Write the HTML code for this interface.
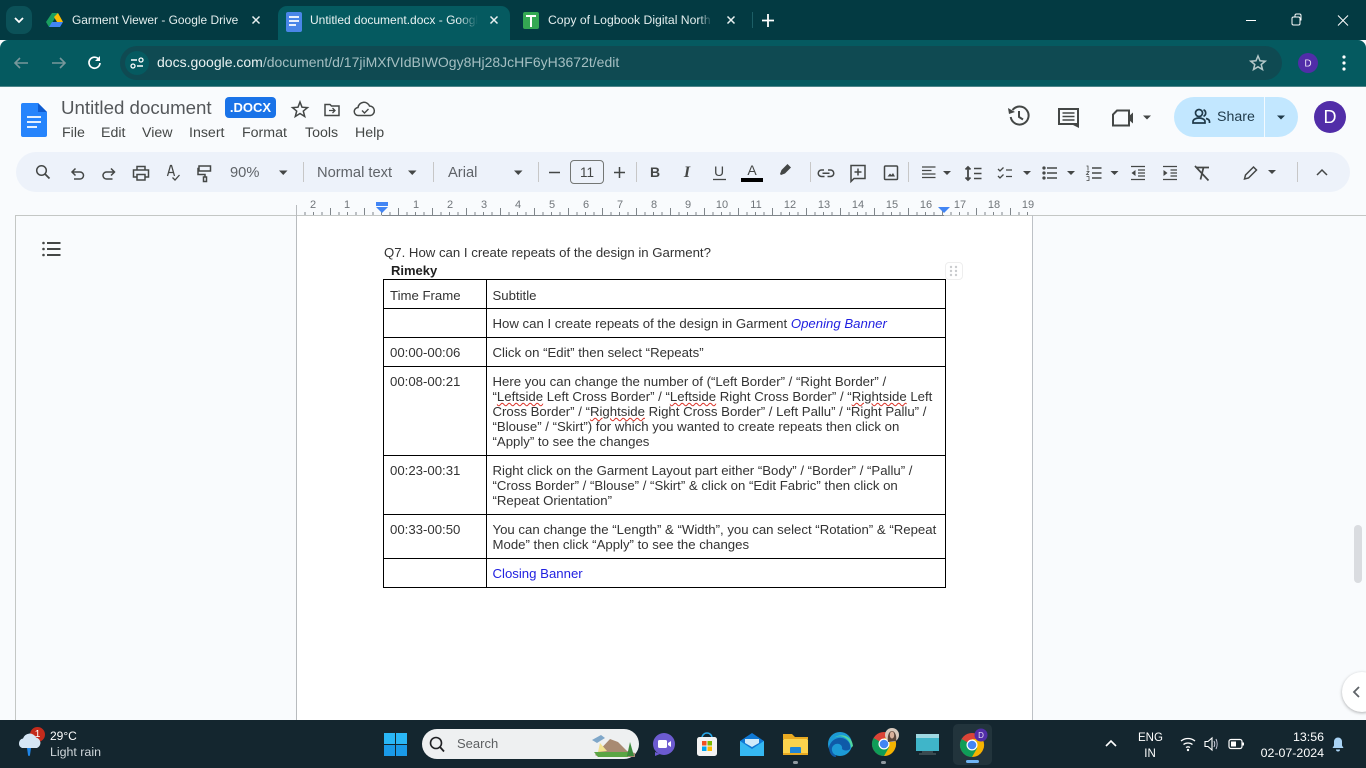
<!DOCTYPE html>
<html><head><meta charset="utf-8"><style>
html,body{margin:0;padding:0;width:1366px;height:768px;overflow:hidden;background:#f9fbfd;font-family:"Liberation Sans",sans-serif}
.a{position:absolute;white-space:nowrap}
.b{position:absolute}
.d{font-size:13.2px;color:#333;line-height:15px;position:absolute;white-space:nowrap}
.l{position:absolute;background:#000}
.m{position:absolute;font-size:14.2px;color:#444746;top:125px;line-height:17px}
.tb{position:absolute;font-size:14.7px;color:#5f6368;top:165px;line-height:17px}
.s{position:absolute;top:162px;width:1px;height:20px;background:#c7c7c7}
.r{position:absolute;font-size:11px;color:#70757a;top:199px;line-height:13px;transform:translateX(-50%)}
.tt{position:absolute;top:13px;font-size:12px;line-height:15px;white-space:nowrap;overflow:hidden;color:#e4eeee}
.k{position:absolute;left:1254px;width:70px;text-align:right;font-size:12.4px;line-height:14px;color:#fff}
.sp{text-decoration:underline wavy #d93025 1px;text-underline-offset:1px}
svg{position:absolute;left:0;top:0}
</style></head><body>
<!-- chrome bars -->
<div class="b" style="left:0;top:0;width:1366px;height:40px;background:#033a42"></div>
<div class="b" style="left:0;top:40px;width:1366px;height:46px;background:#055a60;border-radius:8px 8px 0 0"></div>
<div class="b" style="left:0;top:86px;width:1366px;height:1px;background:#4d8589"></div>
<div class="b" style="left:6px;top:6px;width:26px;height:28px;background:#0b5158;border-radius:9px"></div>
<div class="b" style="left:278px;top:6px;width:232px;height:34px;background:#055a60;border-radius:9px 9px 0 0"></div>
<div class="b" style="left:120px;top:46px;width:1162px;height:34px;background:#0f4a52;border-radius:17px"></div>
<div class="b" style="left:125px;top:51px;width:24px;height:24px;background:#055a60;border-radius:50%"></div>
<div class="tt" style="left:72px;font-size:11.950px">Garment Viewer - Google Drive</div>
<div class="tt" style="left:310px;width:168px;color:#e9f2f2;-webkit-mask-image:linear-gradient(90deg,#000 88%,transparent)">Untitled document.docx - Google Docs</div>
<div class="tt" style="left:548px;width:164px;font-size:12.200px;-webkit-mask-image:linear-gradient(90deg,#000 92%,transparent)">Copy of Logbook Digital North India</div>
<div class="a" style="left:157px;top:54px;font-size:14px;line-height:17px;color:#eaf2f2">docs.google.com<span style="color:#a5bfc2">/document/d/17jiMXfVIdBIWOgy8Hj28JcHF6yH3672t/edit</span></div>

<!-- docs header -->
<div class="a" style="left:61px;top:97px;font-size:18.7px;line-height:22px;color:#54575a">Untitled document</div>
<div class="b" style="left:225px;top:97px;width:51px;height:21px;background:#1a73e8;border-radius:4px;color:#fff;font-size:13px;line-height:21px;text-align:center;font-weight:700">.DOCX</div>
<div class="m" style="left:62px">File</div><div class="m" style="left:101px">Edit</div><div class="m" style="left:142px">View</div><div class="m" style="left:189px">Insert</div><div class="m" style="left:242px">Format</div><div class="m" style="left:305px">Tools</div><div class="m" style="left:355px">Help</div>
<div class="b" style="left:1174px;top:97px;width:124px;height:40px;background:#c2e7ff;border-radius:20px"></div>
<div class="b" style="left:1264px;top:97px;width:1px;height:40px;background:#f3faff"></div>
<div class="a" style="left:1217px;top:109px;font-size:14.2px;line-height:17px;color:#1f3a4a">Share</div>
<div class="b" style="left:1314px;top:101px;width:32px;height:32px;background:#512da8;border-radius:50%;color:#fff;font-size:18px;line-height:33px;text-align:center">D</div>

<!-- toolbar -->
<div class="b" style="left:16px;top:152px;width:1334px;height:40px;background:#edf2fa;border-radius:20px"></div>
<div class="tb" style="left:230px">90%</div><div class="tb" style="left:317px">Normal text</div><div class="tb" style="left:448px">Arial</div>
<div class="b" style="left:570px;top:160px;width:32px;height:22px;border:1px solid #747775;border-radius:4px;font-size:13.5px;line-height:23px;text-align:center;color:#444746">11</div>
<div class="s" style="left:303px"></div><div class="s" style="left:433px"></div><div class="s" style="left:538px"></div><div class="s" style="left:636px"></div><div class="s" style="left:810px"></div><div class="s" style="left:908px"></div><div class="s" style="left:1297px"></div>
<div class="a" style="left:647px;top:164px;font-size:14px;font-weight:700;line-height:17px;color:#444746;width:16px;text-align:center">B</div>
<div class="a" style="left:679px;top:164px;font-family:'Liberation Serif',serif;font-style:italic;font-weight:700;font-size:16px;line-height:17px;color:#444746;width:16px;text-align:center">I</div>
<div class="a" style="left:712px;top:163px;font-size:14px;line-height:17px;color:#444746;width:14px;text-align:center">U</div>
<div class="a" style="left:745px;top:162px;font-size:14px;line-height:17px;color:#444746;width:14px;text-align:center">A</div>

<!-- ruler -->
<div class="b" style="left:296px;top:212px;width:738px;height:3px;background:repeating-linear-gradient(90deg,#80868b 0 1px,transparent 1px 8.5px)"></div>
<div class="b" style="left:296px;top:208px;width:738px;height:7px;background:repeating-linear-gradient(90deg,#80868b 0 1px,transparent 1px 34px)"></div>
<div class="b" style="left:15px;top:215px;width:1351px;height:1px;background:#c4c7c5"></div>
<div class="b" style="left:382px;top:215px;width:562px;height:1px;background:#80868b"></div>
<div class="b" style="left:15px;top:215px;width:1px;height:505px;background:#c4c7c5"></div>
<div class="b" style="left:297px;top:216px;width:735px;height:504px;background:#fff"></div>
<div class="b" style="left:296px;top:205px;width:1px;height:515px;background:#b8bbbe"></div>
<div class="b" style="left:1032px;top:215px;width:1px;height:505px;background:#bdc1c6"></div>
<span class="r" style="left:313px">2</span><span class="r" style="left:347px">1</span><span class="r" style="left:416px">1</span><span class="r" style="left:450px">2</span><span class="r" style="left:484px">3</span><span class="r" style="left:518px">4</span><span class="r" style="left:552px">5</span><span class="r" style="left:586px">6</span><span class="r" style="left:620px">7</span><span class="r" style="left:654px">8</span><span class="r" style="left:688px">9</span><span class="r" style="left:722px">10</span><span class="r" style="left:756px">11</span><span class="r" style="left:790px">12</span><span class="r" style="left:824px">13</span><span class="r" style="left:858px">14</span><span class="r" style="left:892px">15</span><span class="r" style="left:926px">16</span><span class="r" style="left:960px">17</span><span class="r" style="left:994px">18</span><span class="r" style="left:1028px">19</span>

<!-- doc content -->
<div class="d" style="left:384px;top:245px">Q7. How can I create repeats of the design in Garment?</div>
<div class="d" style="left:391px;top:263px;font-weight:700;font-size:13px;color:#202020">Rimeky</div>
<div class="l" style="left:383px;top:279px;width:563px;height:1px"></div>
<div class="l" style="left:383px;top:308px;width:563px;height:1px"></div>
<div class="l" style="left:383px;top:337px;width:563px;height:1px"></div>
<div class="l" style="left:383px;top:366px;width:563px;height:1px"></div>
<div class="l" style="left:383px;top:455px;width:563px;height:1px"></div>
<div class="l" style="left:383px;top:514px;width:563px;height:1px"></div>
<div class="l" style="left:383px;top:558px;width:563px;height:1px"></div>
<div class="l" style="left:383px;top:587px;width:563px;height:1px"></div>
<div class="l" style="left:383px;top:279px;width:1px;height:309px"></div>
<div class="l" style="left:486px;top:279px;width:1px;height:309px"></div>
<div class="l" style="left:945px;top:279px;width:1px;height:309px"></div>
<div class="d" style="left:390px;top:288px">Time Frame</div>
<div class="d" style="left:492.500px;top:288px">Subtitle</div>
<div class="d" style="left:492.500px;top:316px">How can I create repeats of the design in Garment <i style="color:#1f1fe0">Opening Banner</i></div>
<div class="d" style="left:390px;top:345px">00:00-00:06</div>
<div class="d" style="left:492.500px;top:345px">Click on “Edit” then select “Repeats”</div>
<div class="d" style="left:390px;top:374px">00:08-00:21</div>
<div class="d" style="left:492.500px;top:374px">Here you can change the number of (“Left Border” / “Right Border” /</div>
<div class="d" style="left:492.500px;top:389px">“<span class="sp">Leftside</span> Left Cross Border” / “<span class="sp">Leftside</span> Right Cross Border” / “<span class="sp">Rightside</span> Left</div>
<div class="d" style="left:492.500px;top:404px">Cross Border” / “<span class="sp">Rightside</span> Right Cross Border” / Left Pallu” / “Right Pallu” /</div>
<div class="d" style="left:492.500px;top:419px">“Blouse” / “Skirt”) for which you wanted to create repeats then click on</div>
<div class="d" style="left:492.500px;top:434px">“Apply” to see the changes</div>
<div class="d" style="left:390px;top:463px">00:23-00:31</div>
<div class="d" style="left:492.500px;top:463px">Right click on the Garment Layout part either “Body” / “Border” / “Pallu” /</div>
<div class="d" style="left:492.500px;top:478px">“Cross Border” / “Blouse” / “Skirt” &amp; click on “Edit Fabric” then click on</div>
<div class="d" style="left:492.500px;top:493px">“Repeat Orientation”</div>
<div class="d" style="left:390px;top:522px">00:33-00:50</div>
<div class="d" style="left:492.500px;top:522px">You can change the “Length” &amp; “Width”, you can select “Rotation” &amp; “Repeat</div>
<div class="d" style="left:492.500px;top:537px">Mode” then click “Apply” to see the changes</div>
<div class="d" style="left:492.500px;top:566px;color:#1f1fe0">Closing Banner</div>
<div class="b" style="left:945px;top:262px;width:16px;height:16px;border:1px solid #eeeeee;border-radius:4px;background:#fff"></div>
<div class="b" style="left:1354px;top:525px;width:8px;height:58px;background:#dadce0;border-radius:4px"></div>
<div class="b" style="left:1342px;top:672px;width:40px;height:40px;background:#fff;border-radius:50%;box-shadow:0 1px 3px rgba(0,0,0,.3)"></div>

<!-- taskbar -->
<div class="b" style="left:0;top:720px;width:1366px;height:48px;background:#14262f"></div>
<div class="a" style="left:50px;top:729px;font-size:12px;line-height:14px;color:#fff">29°C</div>
<div class="a" style="left:50px;top:745px;font-size:12.4px;line-height:14px;color:#cfd6da">Light rain</div>
<div class="b" style="left:30px;top:727px;width:15px;height:15px;border-radius:50%;background:#c42b1c;color:#fff;font-size:10px;line-height:15px;text-align:center">1</div>
<div class="b" style="left:422px;top:729px;width:217px;height:30px;border-radius:15px;background:#eef0f1"></div>
<div class="a" style="left:457px;top:736px;font-size:13px;line-height:16px;color:#5c5f61">Search</div>
<div class="b" style="left:953px;top:724px;width:39px;height:41px;border-radius:5px;background:#22343c"></div>
<div class="b" style="left:966px;top:760px;width:13px;height:3px;border-radius:2px;background:#6fb5f5"></div>
<div class="b" style="left:793px;top:761px;width:5px;height:3px;border-radius:2px;background:#8f9aa0"></div>
<div class="b" style="left:881px;top:761px;width:5px;height:3px;border-radius:2px;background:#8f9aa0"></div>
<div class="a" style="left:1138px;top:731px;font-size:11.5px;line-height:14px;color:#fff;width:24px;text-align:center">ENG</div>
<div class="a" style="left:1138px;top:747px;font-size:11.5px;line-height:14px;color:#fff;width:24px;text-align:center">IN</div>
<div class="k" style="top:730px">13:56</div>
<div class="k" style="top:746px">02-07-2024</div>

<svg width="1366" height="768" viewBox="0 0 1366 768" fill="none">
<!-- tab strip -->
<path d="M15 18l4 4 4-4" stroke="#fff" stroke-width="1.800"/>
<path d="M52 13h6l-6 10-3 4-3-5z" fill="#1a9e5f"/><path d="M49 27l3-5h11l-3 5z" fill="#4285f4"/><path d="M58 13l5 9h-6l-3-5z" fill="#fbbc04"/>
<path d="M252.500 16.500l7 7M259.500 16.500l-7 7M490.500 16.500l7 7M497.500 16.500l-7 7M727.500 16.500l7 7M734.500 16.500l-7 7" stroke="#e8f0f0" stroke-width="1.500"/>
<rect x="286" y="12" width="16" height="20" rx="2" fill="#4a86e8"/><path d="M289 17h10M289 21h10M289 25h7" stroke="#fff" stroke-width="1.700"/>
<rect x="523" y="12" width="16" height="17" rx="2" fill="#34a853"/><path d="M526 16h10M531 16v11" stroke="#fff" stroke-width="2"/>
<path d="M768 14v13M762 20.500h12" stroke="#fff" stroke-width="1.800"/><path d="M752.500 12v16" stroke="#1c5e66" stroke-width="1"/>
<path d="M1246 20.500h10" stroke="#fff"/><rect x="1292" y="17" width="8" height="8" rx="1.500" stroke="#fff"/><path d="M1295 17v-1.500a1.500 1.500 0 0 1 1.500-1.500h3a1.500 1.500 0 0 1 1.500 1.500v5" stroke="#fff"/><path d="M1338 15.500l10 10M1348 15.500l-10 10" stroke="#fff"/>
<!-- omnibox -->
<path d="M28 63H15m5-5l-5 5 5 5" stroke="#78979b" stroke-width="1.600"/><path d="M52 63h13m-5-5l5 5-5 5" stroke="#78979b" stroke-width="1.600"/>
<path d="M99 59.500a5.500 5.500 0 1 0 1 3.500" stroke="#fff" stroke-width="1.700"/><path d="M100 56v5h-5z" fill="#fff"/>
<path d="M131 60h6M137 66h6" stroke="#fff" stroke-width="1.400"/><circle cx="141" cy="60" r="2" stroke="#fff" stroke-width="1.300"/><circle cx="133" cy="66" r="2" stroke="#fff" stroke-width="1.300"/>
<path d="M1258 56l2 4.800 5.200.4-4 3.300 1.300 5-4.500-2.700-4.500 2.700 1.300-5-4-3.300 5.200-.4z" stroke="#b4c8c9" stroke-width="1.500"/>
<circle cx="1308" cy="63" r="10" fill="#512da8"/><text x="1308" y="66.500" fill="#e8e0f5" font-size="10" text-anchor="middle" font-family="Liberation Sans">D</text>
<circle cx="1344" cy="57" r="1.600" fill="#fff"/><circle cx="1344" cy="63" r="1.600" fill="#fff"/><circle cx="1344" cy="69" r="1.600" fill="#fff"/>
<!-- docs logo -->
<path d="M21 105a2 2 0 0 1 2-2h15l9 9v23a2 2 0 0 1-2 2H23a2 2 0 0 1-2-2z" fill="#2684fc"/><path d="M38 103l9 9h-9z" fill="#0f5bd0"/><path d="M27 117h14M27 122h14M27 127h10" stroke="#fff" stroke-width="1.800"/>
<path d="M300 102l2 5.200 5.500.4-4.200 3.500 1.400 5.400-4.700-3-4.700 3 1.400-5.400-4.200-3.500 5.500-.4z" stroke="#444746" stroke-width="1.500"/>
<path d="M325 104.500h5l1.500 1.500h7.500v9.500h-14z" stroke="#444746" stroke-width="1.500"/><path d="M329 110.500h6m-2.500-2.500l2.500 2.500-2.500 2.500" stroke="#444746" stroke-width="1.300"/>
<path d="M362 115.500h-3.500a4 4 0 0 1-.5-8 6 6 0 0 1 11.500-1.500 4.800 4.800 0 0 1 1 9.500z" stroke="#444746" stroke-width="1.500"/><path d="M362 110.500l2.500 2.500 4-4" stroke="#444746" stroke-width="1.400"/>
<!-- header right -->
<path d="M1012.500 110a9 9 0 1 1-1.800 7" stroke="#444746" stroke-width="2"/><path d="M1008 108l1 6 6-2z" fill="#444746"/><path d="M1019 111v6l4 2.500" stroke="#444746" stroke-width="2"/>
<path d="M1059 109h19v15h-19z" stroke="#444746" stroke-width="2"/><path d="M1073 125h6v3z" fill="#444746"/><path d="M1062.500 113h12M1062.500 116.500h12M1062.500 120h12" stroke="#444746" stroke-width="1.600"/>
<path d="M1117 110.500h12v15h-16v-11z" stroke="#444746" stroke-width="2"/><path d="M1129 116l4-3.500v11l-4-3.500z" fill="#444746"/>
<path d="M1143 115.500h8l-4 4z" fill="#444746"/>
<circle cx="1199" cy="113" r="3.500" stroke="#1f3a4a" stroke-width="1.700"/><path d="M1193 123v-1.500c0-2 3-3.500 6-3.500s6 1.500 6 3.500v1.500z" stroke="#1f3a4a" stroke-width="1.700"/><path d="M1203.500 109.800a3.500 3.500 0 0 1 0 6.500M1206 118.500c2 .5 3.500 1.500 3.500 3v1.500" stroke="#1f3a4a" stroke-width="1.700"/>
<path d="M1277 115.500h8l-4 4z" fill="#1f3a4a"/>
<!-- toolbar icons -->
<g stroke="#444746" stroke-width="1.500">
<circle cx="41.500" cy="170.500" r="4.800"/><path d="M45 174l4.500 4.500" stroke-width="1.800"/>
<path d="M72.500 172h7.500a3.500 3.500 0 0 1 0 7h-6M75.500 168.500L72 172l3.500 3.500"/>
<path d="M114 172h-7.500a3.500 3.500 0 0 0 0 7h6M111 168.500l3.500 3.500-3.500 3.500"/>
<path d="M137 170v-3.500h8v3.500M137 177h-3.500v-7h15v7H145"/><rect x="137" y="174.500" width="8" height="5.500"/>
<path d="M167.500 176l3-10.500h1l3 10.500M168.500 172.500h5M172.500 177.500l2.500 2.500 4.500-5" stroke-width="1.300"/>
<rect x="199" y="166" width="11.500" height="5"/><path d="M199 168.500h-1v6h7v2.500"/><rect x="203.500" y="177" width="3" height="4.500"/>
<path d="M549 172.500h11M614 172.500h11M619.500 167v11"/>
<path d="M741 180h22" stroke="#000" stroke-width="4"/>
<path d="M713 179.500h13" stroke-width="1.300"/>
<path d="M781 175l-1-1 1.500-4 6-6 3.500 3.500-6 6z" fill="#444746" stroke="none"/>
<path d="M824 170h-2.500a3 3 0 0 0 0 6.500h3M828 170h2.500a3 3 0 0 1 0 6.500h-3M822.500 173.300h7"/>
<path d="M851 165.500h14v13h-11l-3 3z"/><path d="M858 168.500v7M854.500 172h7"/>
<rect x="884.500" y="166" width="13" height="13.500" rx="1"/><path d="M887.500 176.500l2.500-3 1.500 1.500 1.500-2 2 3.500z" fill="#444746" stroke="none"/>
<path d="M922 167h13.500M922 170.500h9.500M922 174h13.500M922 177.500h13.500" stroke-width="1.300"/>
<path d="M968 168v11M965.500 169.500l2.500-2.500 2.500 2.500M965.500 177.500l2.500 2.500 2.500-2.500" stroke-width="1.800"/><path d="M974 168.500h7.500M974 173.500h7.500M974 178.500h7.500" stroke-width="1.400"/>
<path d="M998 169l2 2 3.500-3.500M998 176l2 2 3.500-3.500M1006 170h6M1006 176.500h6" stroke-width="1.300"/>
<path d="M1047 168h10M1047 173h10M1047 178h10" stroke-width="1.500"/><circle cx="1044" cy="168" r=".9"/><circle cx="1044" cy="173" r=".9"/><circle cx="1044" cy="178" r=".9"/>
<path d="M1092 168h9.500M1092 173h9.500M1092 178h9.500" stroke-width="1.500"/><path d="M1086.500 166h1.500v4.500M1086.500 171.500h2.500l-2.500 3h2.500M1086.500 176.500h2.500v4h-2.500" stroke-width=".8"/>
<path d="M1131 166.500h14M1138 170h7M1138 173h7M1138 176h7M1131 179.500h14" stroke-width="1.300"/><path d="M1135.500 170l-4 3 4 3z" fill="#444746" stroke="none"/>
<path d="M1163 166.500h14M1170.500 170h6.500M1170.500 173h6.500M1170.500 176h6.500M1163 179.500h14" stroke-width="1.300"/><path d="M1163.500 170l4 3-4 3z" fill="#444746" stroke="none"/>
<path d="M1197 167.500h12M1203.500 167.500l-3 12M1195 166l13.500 14.500" stroke-width="1.700"/>
<path d="M1244.500 179l1-4 8-8 3 3-8 8z"/>
<path d="M1317 175l5-5 5 5"/>
</g>
<g fill="#444746"><path d="M279 170.500h8.500l-4.250 4.500zM408 170.500h8.500l-4.250 4.500zM514 170.500h8.500l-4.250 4.500zM943 171h8l-4 4zM1023 171h8l-4 4zM1067 171h8l-4 4zM1110.500 171h8l-4 4zM1268 170h8l-4 4z"/></g>
<!-- ruler marks -->
<path d="M376 202h12v4h-12z" fill="#4285f4"/><path d="M376 207h12l-6 6z" fill="#4285f4"/><path d="M938 207h12l-6 6z" fill="#4285f4"/>
<!-- outline icon -->
<path d="M47 243h13.500M47 249h13.500M47 255h13.500" stroke="#444746" stroke-width="2"/><circle cx="43.500" cy="243" r="1.300" fill="#444746"/><circle cx="43.500" cy="249" r="1.300" fill="#444746"/><circle cx="43.500" cy="255" r="1.300" fill="#444746"/>
<!-- table handle -->
<g fill="#c9cbce"><circle cx="951" cy="267" r="1.200"/><circle cx="956" cy="267" r="1.200"/><circle cx="951" cy="271" r="1.200"/><circle cx="956" cy="271" r="1.200"/><circle cx="951" cy="275" r="1.200"/><circle cx="956" cy="275" r="1.200"/></g>
<path d="M1359 687l-5 5 5 5" stroke="#5f6368" stroke-width="1.800"/>
<!-- taskbar: weather -->
<path d="M22 748a5 5 0 0 1 1-9.500 7 7 0 0 1 13-1 5.500 5.500 0 0 1 1 10.500z" fill="#d5e6f5"/><path d="M27 748h4l-1 7a1 1 0 0 1-2 0z" fill="#1f86e8"/>
<!-- start -->
<rect x="384" y="733" width="11" height="11" fill="#29b6f6"/><rect x="396" y="733" width="11" height="11" fill="#29b6f6"/><rect x="384" y="745" width="11" height="11" fill="#1a9ae8"/><rect x="396" y="745" width="11" height="11" fill="#1a9ae8"/>
<circle cx="436" cy="743" r="5.500" stroke="#202124" stroke-width="1.600"/><path d="M440 747l4 4.500" stroke="#202124" stroke-width="1.800"/>
<path d="M595 755l15-16 8 3 9 9 8 2v4h-36z" fill="#a88a72"/><path d="M592 740l9-5 4 3-8 5z" fill="#7fa7c9"/><path d="M594 752h34v5h-30z" fill="#5aa544"/><path d="M630 742l4 14h-7z" fill="#3c8a3c"/><path d="M600 743l7 8-9 1z" fill="#f1e28f"/>
<!-- teams-like -->
<circle cx="664" cy="744" r="11" fill="#6c5bd0"/><path d="M655 752v4l5-2z" fill="#6c5bd0"/><rect x="658" y="740" width="9" height="8" rx="1.500" fill="#fff"/><path d="M668 743l3-2v6l-3-2z" fill="#fff"/>
<!-- store -->
<path d="M702 738a5 5 0 0 1 10 0" stroke="#28a8ea" stroke-width="1.500"/><rect x="697" y="737" width="20" height="19" rx="2.500" fill="#f3f3f3"/><rect x="702" y="741" width="4.500" height="4.500" fill="#f25022"/><rect x="707.500" y="741" width="4.500" height="4.500" fill="#7fba00"/><rect x="702" y="746.500" width="4.500" height="4.500" fill="#00a4ef"/><rect x="707.500" y="746.500" width="4.500" height="4.500" fill="#ffb900"/>
<!-- mail -->
<path d="M740 741l12-8 12 8v14h-24z" fill="#0f78d4"/><path d="M740 741l12 8 12-8v15h-24z" fill="#35b8f2"/><path d="M745 739h14v4l-7 4-7-4z" fill="#cfeafa"/>
<!-- folder -->
<path d="M783 734h9l3 3h13v2h-25z" fill="#e8a921"/><rect x="783" y="739" width="25" height="16" rx="1" fill="#fcd34d"/><rect x="790" y="747" width="11" height="8" rx="1" fill="#1f86d8"/><rect x="783" y="753" width="25" height="2" fill="#e8a921"/>
<!-- edge -->
<circle cx="840" cy="744" r="12" fill="#1c9ad6"/><path d="M829 747c2-8 10-11 16-8 4 2 6 6 5 10-2 2-6 2-8 0 1-4-4-7-8-4-3 2-3 7 1 10 2 1 1 2 0 2-4-1-6-5-6-10z" fill="#0f5aa8"/><path d="M851 748c0-9-10-15-17-10 6-5 18-3 19 8z" fill="#50d5a0"/>
<!-- chrome 1 -->
<circle cx="884" cy="744" r="12" fill="#db4437"/><path d="M884 756a12 12 0 0 0 10.400-18h-10.400z" fill="#f4b400"/><path d="M873.600 738a12 12 0 0 0 10.400 18l5.200-9z" fill="#0f9d58"/><circle cx="884" cy="744" r="5.500" fill="#fff"/><circle cx="884" cy="744" r="4.300" fill="#4285f4"/>
<circle cx="892" cy="735" r="7" fill="#d8c9bd"/><path d="M888 742c-1-6 1-11 4-11s5 5 4 10z" fill="#5b463c"/><ellipse cx="892" cy="735" rx="2.200" ry="3.500" fill="#d9b19c"/>
<!-- monitor -->
<rect x="916" y="734" width="23" height="17" fill="#3fb5c9"/><rect x="916" y="734" width="23" height="4" fill="#9fd8e2"/><path d="M922 751h11v2h3v2h-17v-2h3z" fill="#3a4a50"/>
<!-- chrome 2 -->
<circle cx="972" cy="745" r="12" fill="#db4437"/><path d="M972 757a12 12 0 0 0 10.400-18h-10.400z" fill="#f4b400"/><path d="M961.600 739a12 12 0 0 0 10.400 18l5.200-9z" fill="#0f9d58"/><circle cx="972" cy="745" r="5.500" fill="#fff"/><circle cx="972" cy="745" r="4.300" fill="#4285f4"/>
<circle cx="981" cy="735" r="6.500" fill="#512da8"/><text x="981" y="738" text-anchor="middle" fill="#e8e0f5" font-size="8" font-family="Liberation Sans">D</text>
<!-- tray -->
<path d="M1106 746l5-5 5 5" stroke="#fff" stroke-width="1.600"/>
<path d="M1181 741a11 11 0 0 1 14 0M1183.500 744.500a7.500 7.500 0 0 1 9 0M1186 747.500a3.500 3.500 0 0 1 4 0" stroke="#fff" stroke-width="1.300"/><circle cx="1188" cy="750" r="1.200" fill="#fff"/>
<path d="M1205 741.500h3l4-3.500v12l-4-3.500h-3z" stroke="#fff" stroke-width="1.100"/><path d="M1214 741c1 2 1 4 0 6M1216 739c1.500 3 1.500 7 0 10" stroke="#ccd" stroke-width="1"/>
<rect x="1229" y="739.500" width="13" height="9" rx="2" stroke="#fff" stroke-width="1.200"/><rect x="1231" y="741.500" width="5" height="5" fill="#fff"/><rect x="1242.500" y="742.500" width="1.500" height="3" fill="#fff"/>
<path d="M1338 737.500a4 4 0 0 1 4 4v4l1.500 2.500h-11l1.500-2.500v-4a4 4 0 0 1 4-4z" fill="#a9d3f5"/><path d="M1336 749.500h4a2 2 0 0 1-4 0z" fill="#a9d3f5"/>
</svg>
</body></html>
